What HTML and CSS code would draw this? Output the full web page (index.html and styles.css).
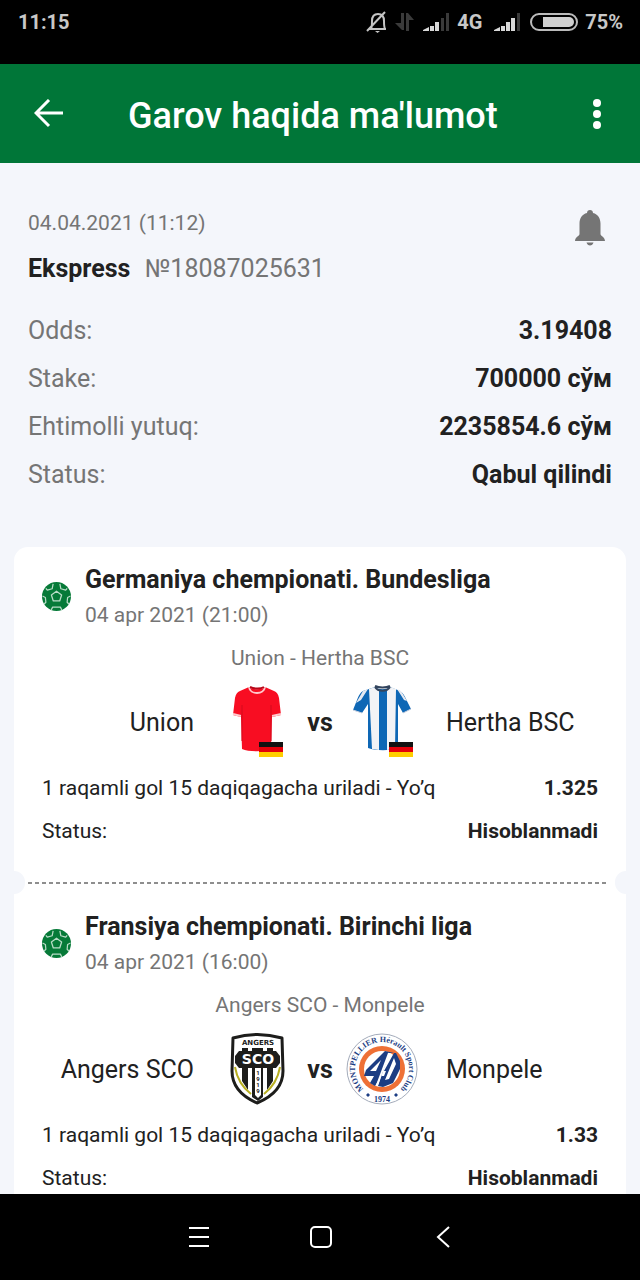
FILE: index.html
```html
<!doctype html>
<html lang="uz">
<head>
	<meta charset="utf-8" />
	<meta name="viewport" content="width=device-width, initial-scale=1" />
	<title>Garov haqida ma'lumot</title>
	<link rel="stylesheet" href="styles.css">
</head>
<body>
	<!-- shared icons -->
	<svg class="defs" aria-hidden="true">
		<symbol id="ball" viewBox="0 0 30 30">
			<circle cx="15" cy="15" r="15" fill="#067a38"/>
			<g fill="none" stroke="#b9dcc7" stroke-width="1.3" stroke-linejoin="round">
				<path d="M15 9.5l5.3 3.9-2 6.2h-6.6l-2-6.2z"/>
				<path d="M4 6.500l1.500 2 5-1.500 1-5"/>
				<path d="M26 6.500l-1.500 2-5-1.500-1-5"/>
				<path d="M.5 14.500l3 1.500.5 5-2 2"/>
				<path d="M29.500 14.500l-3 1.500-.5 5 2 2"/>
				<path d="M9.500 29l1.500-3h8l1.500 3"/>
			</g>
		</symbol>
		<symbol id="flag-de" viewBox="0 0 24 15">
			<path fill="#111" d="M0 0h24v5H0z"/>
			<path fill="#e3000b" d="M0 5h24v5H0z"/>
			<path fill="#ffce00" d="M0 10h24v5H0z"/>
		</symbol>
	</svg>

	<div class="statusbar">
		<span>11:15</span>
		<div class="indicators">
			<svg width="22" height="24" viewBox="0 0 22 24" fill="none" stroke="#c4c4c4" stroke-width="2">
				<path d="M3 19h17M5 19c1-2 1-4 1-8 0-4 2-7 6-7s6 3 6 7c0 4 0 6 1 8M1 21L19 2"/>
				<path d="M9 21h5l-2.500 2z" fill="#c4c4c4" stroke="none"/>
			</svg>
			<svg width="20" height="20" viewBox="0 0 20 20" fill="#3a3a3a">
				<path d="M6 1h3v17H7L0 11h6zM11 19h3V8h5L13 1h-2z"/>
			</svg>
			<svg width="28" height="20" viewBox="0 0 28 20" fill="#d8d8d8">
				<path d="M1 19v-1l6-3v4zM8 14h4v5H8zM13 10h4v9h-4z"/>
				<path fill="#3a3a3a" d="M19 6h3v13h-3zM24 1h3v18h-3z"/>
			</svg>
			<span>4G</span>
			<svg class="sim" width="28" height="20" viewBox="0 0 28 20" fill="#d8d8d8">
				<path d="M1 19v-1l6-3v4zM8 14h4v5H8zM13 10h4v9h-4zM18 6h4v13h-4z"/>
				<path fill="#3a3a3a" d="M24 1h3v18h-3z"/>
			</svg>
			<svg class="battery" width="48" height="18" viewBox="0 0 48 18">
				<rect x="1" y="1" width="46" height="16" rx="8" fill="none" stroke="#bbb" stroke-width="2"/>
				<path d="M13 4h26a5 5 0 0 1 0 10H13z" fill="#d0d0d0"/>
			</svg>
			<span>75%</span>
		</div>
	</div>

	<header class="topbar">
		<button type="button" aria-label="Orqaga">
			<svg width="30" height="30" viewBox="0 0 30 30" fill="none" stroke="#fff" stroke-width="3">
				<path d="M29 14H3M15 1L2 14l13 13"/>
			</svg>
		</button>
		<h1>Garov haqida ma'lumot</h1>
		<button type="button" aria-label="Menyu">
			<svg width="30" height="30" viewBox="0 0 30 30" fill="#fff">
				<circle cx="15" cy="4" r="4"/>
				<circle cx="15" cy="15" r="4"/>
				<circle cx="15" cy="26" r="4"/>
			</svg>
		</button>
	</header>

	<main>
		<section class="summary">
			<div class="summary-head">
				<div>
					<p class="date">04.04.2021 (11:12)</p>
					<p class="number"><b>Ekspress</b> <span>№18087025631</span></p>
				</div>
				<button type="button" class="bell" aria-label="Bildirishnoma">
					<svg width="30" height="36" viewBox="0 0 30 36" fill="#757575">
						<path d="M15 0c1.800 0 3 1.200 3 3 5 1.200 7.500 5.500 7.500 10.500V24c0 2 4.500 3 4.500 7H0c0-4 4.500-5 4.500-7V13.500C4.500 8.500 7 4.200 12 3c0-1.800 1.200-3 3-3zM11.500 32.500h7c-.5 2-2 3-3.500 3s-3-1-3.500-3z"/>
					</svg>
				</button>
			</div>
			<dl>
				<div><dt>Odds:</dt><dd>3.19408</dd></div>
				<div><dt>Stake:</dt><dd>700000 сўм</dd></div>
				<div><dt>Ehtimolli yutuq:</dt><dd>2235854.6 сўм</dd></div>
				<div><dt>Status:</dt><dd>Qabul qilindi</dd></div>
			</dl>
		</section>

		<div class="ticket">
			<article class="bet">
				<div class="league">
					<svg width="29" height="29"><use href="#ball"/></svg>
					<div>
						<h2>Germaniya chempionati. Bundesliga</h2>
						<p>04 apr 2021 (21:00)</p>
					</div>
				</div>
				<p class="match">Union - Hertha BSC</p>
				<div class="teams">
					<span class="home">Union</span>
					<svg width="72" height="80" viewBox="0 0 72 80">
						<path fill="#f80d22" d="M27 4l-9 4c-3 1-4 3-5 7l-2 17 8 2 1 32c7 3 23 3 29 0l1-32 9-2-2-17c-1-4-2-6-5-7l-9-4c-3 3-13 3-16 0z"/>
						<path fill="none" stroke="#ffc9cd" stroke-width="2" d="M27 4c1 8 15 8 16 0M11 31l8 2M50 33l9-2"/>
						<path fill="none" stroke="#b80718" stroke-width="2" d="M28 4c4 2 11 2 14 0"/>
						<path fill="none" stroke="#d40b1c" d="M20 22v36M49 22v36"/>
						<use href="#flag-de" x="37" y="59" width="24" height="15"/>
					</svg>
					<b>vs</b>
					<svg width="72" height="80" viewBox="0 0 72 80">
						<path fill="#0e67b5" d="M29 4L17 8c-3 2-4 4-6 9L7 27l9 3 6-9v44c8 3 22 3 30 0V21l5 9 8-4-5-10c-2-4-3-6-6-8L44 4c-4 3-11 3-15 0z"/>
						<path fill="#f2f3f6" d="M23 6l6-2 4 3v60l-7-1zM50 6l-6-2-3 3v60l8-1z"/>
						<path fill="#e5e9f1" d="M17 8l5-2-7 11-5 3zM55 8l-4-2 7 11 3 1z"/>
						<path fill="none" stroke="#33455e" stroke-width="2" d="M29 4c3 5 12 5 15 0M29 3c4 2 11 2 15 0"/>
						<path fill="none" stroke="#c5cede" d="M7 27l9 3M57 30l8-4"/>
						<use href="#flag-de" x="43" y="59" width="24" height="15"/>
					</svg>
					<span class="away">Hertha BSC</span>
				</div>
				<p class="row"><span>1 raqamli gol 15 daqiqagacha uriladi - Yo’q</span><b>1.325</b></p>
				<p class="row status"><span>Status:</span><b>Hisoblanmadi</b></p>
			</article>

			<div class="tear"></div>

			<article class="bet">
				<div class="league">
					<svg width="29" height="29"><use href="#ball"/></svg>
					<div>
						<h2>Fransiya chempionati. Birinchi liga</h2>
						<p>04 apr 2021 (16:00)</p>
					</div>
				</div>
				<p class="match">Angers SCO - Monpele</p>
				<div class="teams">
					<span class="home">Angers SCO</span>
					<svg width="72" height="80" viewBox="0 0 72 80">
						<path fill="#fff" stroke="#1d1d1b" stroke-width="3" stroke-linejoin="round" d="M11 8c17-5 32-5 49 0l1 33c0 15-9 25-26 32C19 66 10 56 10 41z"/>
						<path fill="#1d1d1b" d="M20 18h6v42l-6-9zM30 18h11v49l-5 4-6-4zM45 18h6v33l-6 9z"/>
						<path fill="#fff" d="M33 38h6v27l-3 3-3-3z"/>
						<path fill="none" stroke="#b7ae20" stroke-width="2" d="M13 37c2 12 7 20 16 27M58 37c-2 12-7 20-16 27"/>
						<path fill="#1d1d1b" d="M17 21h37l4 5v7l-4 5H17l-4-5v-7z"/>
						<text class="crest-name" x="36" y="15">ANGERS</text>
						<text class="crest-sco" x="36" y="34">SCO</text>
						<text class="crest-year" x="36" y="45">1</text>
						<text class="crest-year" x="36" y="51">9</text>
						<text class="crest-year" x="36" y="57">1</text>
						<text class="crest-year" x="36" y="63">9</text>
					</svg>
					<b>vs</b>
					<svg width="72" height="80" viewBox="0 0 72 80">
						<defs>
							<path id="ring" d="M19 60A27 27 0 1 1 53 60"/>
						</defs>
						<circle cx="36" cy="39" r="35" fill="#fff" stroke="#a4acbb"/>
						<circle cx="36" cy="39" r="23" fill="#ee7036"/>
						<circle cx="36" cy="39" r="18" fill="#fff"/>
						<path fill="#1c3d83" d="M39 21L20 40l-2 6h10l-4 7 5 3 6-10h3l2-5h-2l10-18zM35 30l-5 11h-6zM43 23h7l4 8v8l-7 14-10 4-5-1zM48 28l-9 22 4-1 7-15z"/>
						<path fill="none" stroke="#fff" stroke-width="2" d="M43 23L31 55"/>
						<text class="crest-ring"><textPath href="#ring" startOffset="50%">MONTPELLIER Hérault Sport Club</textPath></text>
						<text class="crest-ring" x="36" y="72">1974</text>
						<path fill="#1c3d83" d="M22 63l2 2-2 2-2-2zM50 63l2 2-2 2-2-2z"/>
					</svg>
					<span class="away">Monpele</span>
				</div>
				<p class="row"><span>1 raqamli gol 15 daqiqagacha uriladi - Yo’q</span><b>1.33</b></p>
				<p class="row status"><span>Status:</span><b>Hisoblanmadi</b></p>
			</article>
		</div>
	</main>

	<nav class="navbar">
		<button type="button" aria-label="Ilovalar">
			<svg width="24" height="24" viewBox="0 0 24 24"><path d="M2 3h20M2 12h20M2 21h20"/></svg>
		</button>
		<button type="button" aria-label="Bosh ekran">
			<svg width="24" height="24" viewBox="0 0 24 24"><rect x="2" y="2" width="20" height="20" rx="4"/></svg>
		</button>
		<button type="button" aria-label="Ortga">
			<svg width="24" height="24" viewBox="0 0 24 24"><path d="M18 2L7 12l11 10"/></svg>
		</button>
	</nav>
</body>
</html>
```
FILE: styles.css
```css
* {
	margin: 0;
	padding: 0;
	box-sizing: border-box;
}
body {
	height: 100vh;
	display: flex;
	flex-direction: column;
	background: #f4f6fb;
	color: #212121;
	font-family: Roboto, sans-serif;
	font-size: 21px;
	line-height: 30px;
}
button {
	border: none;
	background: none;
	cursor: pointer;
}
svg {
	display: block;
	flex: none;
}
b {
	font-weight: 700;
}
.defs {
	position: absolute;
	width: 0;
	height: 0;
}
/* phone status bar */
.statusbar {
	flex: none;
	height: 64px;
	padding: 7px 17px 0 18px;
	display: flex;
	justify-content: space-between;
	align-items: flex-start;
	background: #000;
	color: #c8c8c8;
	font-size: 20px;
	font-weight: 700;
}
.indicators {
	display: flex;
	align-items: center;
	gap: 7px;
}
.indicators .sim {
	margin-left: 4px;
}
.indicators .battery {
	margin-left: 2px;
}
/* header */
.topbar {
	flex: none;
	height: 99px;
	padding: 0 28px 0 34px;
	display: flex;
	align-items: center;
	background: #007638;
	color: #fff;
}
.topbar h1 {
	flex: 1;
	padding: 4px 0 0 64px;
	font-size: 36px;
	line-height: 42px;
	font-weight: 500;
}
main {
	flex: 1;
	min-height: 0;
	overflow-y: auto;
	scrollbar-width: none;
}
/* summary */
.summary {
	padding: 45px 28px 48px;
	font-size: 25px;
}
.summary-head {
	display: flex;
	justify-content: space-between;
	align-items: flex-start;
	margin-bottom: 23px;
}
.summary .date {
	margin-bottom: 16px;
	color: #757575;
	font-size: 21px;
}
.number span {
	margin-left: 8px;
	color: #757575;
}
.bell {
	padding: 2px 7px 0 0;
}
.summary dl div {
	display: flex;
	justify-content: space-between;
	line-height: 48px;
}
.summary dt {
	color: #757575;
}
.summary dd {
	font-weight: 700;
}
/* ticket */
.ticket {
	margin: 0 14px 28px;
	border-radius: 14px;
	background: #fff;
	overflow: hidden;
}
.bet {
	padding: 18px 28px 25px;
}
.league {
	display: flex;
	align-items: center;
	gap: 14px;
}
.league svg {
	margin-bottom: 2px;
}
.league h2 {
	margin-bottom: 5px;
	font-size: 25px;
	line-height: 30px;
	font-weight: 700;
}
.league p {
	color: #757575;
}
.match {
	margin: 13px 0 10px;
	color: #757575;
	text-align: center;
}
.teams {
	display: grid;
	grid-template-columns: 1fr 72px 52px 72px 1fr;
	align-items: center;
	margin-bottom: 10px;
	font-size: 25px;
}
.teams b {
	text-align: center;
}
.home {
	padding-right: 28px;
	text-align: right;
}
.away {
	padding-left: 28px;
}
.row {
	display: flex;
	justify-content: space-between;
}
.status {
	margin-top: 13px;
}
/* tear line between the bets */
.tear {
	height: 23px;
	display: flex;
	justify-content: space-between;
	background: repeating-linear-gradient(90deg, #8e8e8e 0 4px, transparent 4px 7px) 14px 11px / calc(100% - 32px) 2px no-repeat;
}
.tear:before,
.tear:after {
	content: "";
	width: 11px;
	background: #f4f6fb;
}
.tear:before {
	border-radius: 0 12px 12px 0;
}
.tear:after {
	border-radius: 12px 0 0 12px;
}
/* club crests */
.crest-name,
.crest-sco,
.crest-year,
.crest-ring {
	text-anchor: middle;
}
.crest-name {
	font: 700 7px "DejaVu Sans", sans-serif;
	fill: #1d1d1b;
}
.crest-sco {
	font: 700 14px "DejaVu Sans", sans-serif;
	fill: #fff;
}
.crest-year {
	font: 700 6px Roboto, sans-serif;
	fill: #1d1d1b;
}
.crest-ring {
	font: 700 8px "Liberation Serif", serif;
	fill: #1c3d83;
}
/* phone navigation */
.navbar {
	flex: none;
	height: 86px;
	padding-left: 2px;
	display: flex;
	justify-content: center;
	align-items: center;
	background: #000;
}
.navbar button {
	width: 122px;
	display: flex;
	justify-content: center;
}
.navbar svg {
	fill: none;
	stroke: #fff;
	stroke-width: 2;
}
```
